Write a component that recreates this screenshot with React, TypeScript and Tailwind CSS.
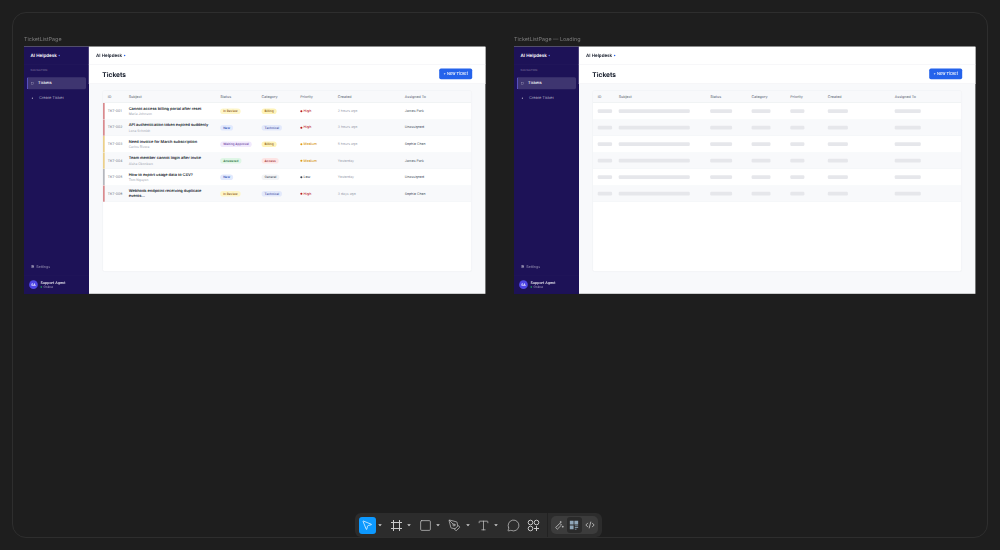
import { MessageCircle, MousePointer2, PenTool, Settings, Square, Type } from 'lucide-react';

type Ticket = {
  id: string;
  subject: string;
  requester: string;
  status: string;
  statusClass: string;
  category: string;
  categoryClass: string;
  priority: string;
  priorityClass: string;
  dotClass: string;
  barClass: string;
  created: string;
  assignee: string;
};

const reviewClass = 'bg-[#fef6c8] text-[#854d0e]';
const newClass = 'bg-[#e2e9fd] text-[#1e40af]';
const billingClass = 'bg-[#fef3b8] text-[#854d0e]';
const technicalClass = 'bg-[#e3e9fb] text-[#3a4a9f]';
const highText = 'text-[#c2383a]';
const mediumText = 'text-[#d99a1c]';

const tickets: Ticket[] = [
  { id: 'TKT-001', subject: 'Cannot access billing portal after reset', requester: 'Maria Johnson', status: 'In Review', statusClass: reviewClass, category: 'Billing', categoryClass: billingClass, priority: 'High', priorityClass: highText, dotClass: 'bg-[#b91c1c]', barClass: 'bg-[#d98a8e]', created: '2 hours ago', assignee: 'James Park' },
  { id: 'TKT-002', subject: 'API authentication token expired suddenly', requester: 'Lena Schmidt', status: 'New', statusClass: newClass, category: 'Technical', categoryClass: technicalClass, priority: 'High', priorityClass: highText, dotClass: 'bg-[#b91c1c]', barClass: 'bg-[#d98a8e]', created: '3 hours ago', assignee: 'Unassigned' },
  { id: 'TKT-003', subject: 'Need invoice for March subscription', requester: 'Carlos Rivera', status: 'Waiting Approval', statusClass: 'bg-[#f1e9fd] text-[#6b3fa0]', category: 'Billing', categoryClass: billingClass, priority: 'Medium', priorityClass: mediumText, dotClass: 'bg-[#e09a12]', barClass: 'bg-[#ecd08a]', created: '5 hours ago', assignee: 'Sophie Chen' },
  { id: 'TKT-004', subject: 'Team member cannot login after invite', requester: 'Aisha Okonkwo', status: 'Answered', statusClass: 'bg-[#dff6e6] text-[#166534]', category: 'Access', categoryClass: 'bg-[#fde4e4] text-[#991b1b]', priority: 'Medium', priorityClass: mediumText, dotClass: 'bg-[#e09a12]', barClass: 'bg-[#ecd08a]', created: 'Yesterday', assignee: 'James Park' },
  { id: 'TKT-005', subject: 'How to export usage data to CSV?', requester: 'Tom Nguyen', status: 'New', statusClass: newClass, category: 'General', categoryClass: 'bg-[#f3f4f6] text-[#374151]', priority: 'Low', priorityClass: 'text-[#4b5563]', dotClass: 'bg-[#374151]', barClass: 'bg-[#b5b7bd]', created: 'Yesterday', assignee: 'Unassigned' },
  { id: 'TKT-006', subject: 'Webhook endpoint receiving duplicate events...', requester: '', status: 'In Review', statusClass: reviewClass, category: 'Technical', categoryClass: technicalClass, priority: 'High', priorityClass: highText, dotClass: 'bg-[#b91c1c]', barClass: 'bg-[#d98a8e]', created: '3 days ago', assignee: 'Sophie Chen' },
];

const gridClass = 'grid grid-cols-[70px_305px_138px_129px_125px_223px_1fr] pl-[16px]';

function Pill({ className, children }: { className: string; children: string }) {
  return <span className={`rounded-full px-[10px] py-[3px] text-[10.5px] leading-[13px] font-medium whitespace-nowrap ${className}`}>{children}</span>;
}

function Skeleton({ width }: { width: string }) {
  return <div className={`h-3 rounded bg-[#e6e7eb] ${width}`} />;
}

function Sidebar() {
  return (
    <aside className="flex w-[216px] shrink-0 flex-col bg-[#1d1257] text-white">
      <div className="flex h-[60px] items-center gap-[6px] border-b border-white/5 pl-[22px] text-[15px] font-semibold">
        AI Helpdesk <span className="h-[5px] w-[5px] rounded-full bg-[#4f6ef7]" />
      </div>
      <div className="mt-[13px] mb-[17px] pl-[22px] text-[9px] leading-3 tracking-[0.1px] text-white/40">NAVIGATION</div>
      <div className="mx-[9px] flex h-10 items-center gap-[14px] rounded-md border-l-[3px] border-[#6d6cf0] bg-white/15 pl-[12px] text-[13px] font-medium">
        <span className="h-[9px] w-[9px] border border-white/60" />
        Tickets
      </div>
      <div className="mx-[9px] mt-[10px] flex h-10 items-center gap-[20px] pl-[17px] text-[13px] text-white/60">
        <span className="h-1 w-1 rounded-full bg-white/70" />
        Create Ticket
      </div>
      <div className="mt-auto flex h-[58px] items-center gap-[6px] pl-[23px] text-xs text-white/50">
        <Settings className="h-3 w-3 text-white/70" strokeWidth={3} />
        Settings
      </div>
      <div className="flex h-[62px] items-center gap-[9px] border-t border-white/5 pl-[17px]">
        <span className="flex h-[29px] w-[29px] items-center justify-center rounded-full bg-[#4f46e5] text-[11px] font-semibold">SA</span>
        <span>
          <span className="block text-xs leading-[15px] font-medium">Support Agent</span>
          <span className="flex items-center gap-[5px] text-[10.5px] leading-[14px] text-white/60">
            <span className="h-[5px] w-[5px] rounded-full bg-[#22c55e]" />
            Online
          </span>
        </span>
      </div>
    </aside>
  );
}

function Row({ ticket, index }: { ticket: Ticket; index: number }) {
  return (
    <div className={`relative h-[55px] items-center border-b border-[#eef0f3] ${gridClass} ${index % 2 ? 'bg-[#f8f9fb]' : 'bg-white'}`}>
      <span className={`absolute top-0 bottom-0 left-0 w-[6px] ${ticket.barClass}`} />
      <span className="text-[11.5px] text-[#6b7280]">{ticket.id}</span>
      <div className="pr-[24px]">
        <div className="text-[13px] leading-[16px] font-semibold text-[#111827]">{ticket.subject}</div>
        {ticket.requester && <div className="mt-[2px] text-[11px] leading-[14px] text-[#9ca3af]">{ticket.requester}</div>}
      </div>
      <div className="flex"><Pill className={ticket.statusClass}>{ticket.status}</Pill></div>
      <div className="flex"><Pill className={ticket.categoryClass}>{ticket.category}</Pill></div>
      <div className={`flex items-center gap-[4px] text-[11.5px] font-medium ${ticket.priorityClass}`}>
        <span className={`h-[7px] w-[7px] rounded-full ${ticket.dotClass}`} />
        {ticket.priority}
      </div>
      <span className="text-[11.5px] text-[#9ca3af]">{ticket.created}</span>
      <span className="text-[11.5px] text-[#4b5563]">{ticket.assignee}</span>
    </div>
  );
}

function SkeletonRow({ index }: { index: number }) {
  return (
    <div className={`h-[55px] items-center border-b border-[#eef0f3] ${gridClass} ${index % 2 ? 'bg-[#f8f9fb]' : 'bg-white'}`}>
      <Skeleton width="w-[48px]" />
      <Skeleton width="w-[237px]" />
      <Skeleton width="w-[73px]" />
      <Skeleton width="w-[63px]" />
      <Skeleton width="w-[47px]" />
      <Skeleton width="w-[67px]" />
      <Skeleton width="w-[87px]" />
    </div>
  );
}

// frames sit on the canvas at 30% zoom
function TicketFrame({ label, left, loading }: { label: string; left: string; loading?: boolean }) {
  return (
    <div className={`absolute top-[34px] w-[1538px] origin-top-left scale-[0.3] ${left}`}>
      <div className="h-[42px] text-lg leading-9 text-[#7d7d7d]">{label}</div>
      <div className="flex h-[824px] overflow-hidden bg-[#f8f9fb]">
        <Sidebar />
        <main className="flex min-w-0 flex-1 flex-col">
          <div className="flex h-[60px] shrink-0 items-center gap-[6px] border-b-2 border-[#e8eaee] bg-white pl-[24px] text-[15px] font-semibold text-[#111827]">
            AI Helpdesk <span className="h-[5px] w-[5px] rounded-full bg-[#2563eb]" />
          </div>
          <div className="flex h-[64px] shrink-0 items-center justify-between border-b-2 border-[#f0f1f4] bg-white pr-[44px] pl-[45px]">
            <h1 className="pt-[5px] text-[22px] font-bold text-[#111827]">Tickets</h1>
            <button className="h-9 w-[110px] rounded-md bg-[#2563eb] text-[13px] font-medium text-white">+ New Ticket</button>
          </div>
          <div className="mx-[45px] mt-[22px] mb-[73px] flex-1 overflow-hidden rounded-lg border-2 border-[#eceef1] bg-white">
            <div className={`h-10 items-center border-b-2 border-[#eceef1] bg-[#f8f9fb] text-xs font-medium text-[#6b7280] ${gridClass}`}>
              <span>ID</span>
              <span>Subject</span>
              <span>Status</span>
              <span>Category</span>
              <span>Priority</span>
              <span>Created</span>
              <span>Assigned To</span>
            </div>
            {loading
              ? tickets.map((ticket, index) => <SkeletonRow key={ticket.id} index={index} />)
              : tickets.map((ticket, index) => <Row key={ticket.id} ticket={ticket} index={index} />)}
          </div>
        </main>
      </div>
    </div>
  );
}

function Caret({ className }: { className: string }) {
  return (
    <svg viewBox="0 0 6 6" className={`h-[6px] w-[6px] shrink-0 ${className}`}>
      <path d="M1.2 2.2h3.6L3 4.2z" fill="#d0d0d0" />
    </svg>
  );
}

function Toolbar() {
  const iconClass = 'h-[13px] w-[13px] shrink-0 text-[#c9c9c9]';
  return (
    <div className="absolute top-[513px] left-[355px] flex h-[24px] w-[246.5px] items-center rounded-[6px] bg-[#2c2c2c] pl-[3.5px]">
      <div className="flex h-[17px] w-[17px] shrink-0 items-center justify-center rounded-[3px] bg-[#0d99ff]">
        <MousePointer2 className="h-[12px] w-[12px] text-white" strokeWidth={1.4} />
      </div>
      <Caret className="ml-[1px]" />
      {/* frame tool */}
      <svg viewBox="0 0 13 13" fill="none" stroke="#c9c9c9" strokeWidth="1" className={`ml-[7px] ${iconClass}`}>
        <path d="M1 3.5h11M1 9.5h11M3.5 1v11M9.5 1v11" />
      </svg>
      <Caret className="ml-[3px]" />
      <Square className={`ml-[7px] ${iconClass}`} strokeWidth={1.3} />
      <Caret className="ml-[3.5px]" />
      <PenTool className={`ml-[7px] ${iconClass}`} strokeWidth={1.3} />
      <Caret className="ml-[3.5px]" />
      <Type className={`ml-[6.5px] ${iconClass}`} strokeWidth={1.3} />
      <Caret className="ml-[3px]" />
      <MessageCircle className={`ml-[7.5px] ${iconClass}`} strokeWidth={1.3} />
      {/* actions */}
      <svg viewBox="0 0 13 13" fill="none" stroke="#c9c9c9" strokeWidth="1" className={`ml-[7px] ${iconClass}`}>
        <circle cx="3.5" cy="3.5" r="2.3" />
        <circle cx="9.5" cy="3.5" r="2.3" />
        <circle cx="3.5" cy="9.5" r="2.3" />
        <path d="M9.5 7v5M7 9.5h5" />
      </svg>
      <span className="ml-[7px] h-full w-px shrink-0 bg-[#222222]" />
      <div className="ml-[3px] flex h-[18px] w-[47px] shrink-0 items-center rounded-[5px] bg-[#3c3c3c]">
        <span className="flex h-[16px] w-[16px] items-center justify-center">
          <svg viewBox="0 0 12 12" fill="none" stroke="#c4c4c4" strokeWidth="1" className="h-[10px] w-[10px]">
            <path d="M2 9l5-5 2 2-5 5zM8 1.5v2M7 2.5h2M10.5 7v2M9.5 8h2" />
          </svg>
        </span>
        <span className="flex h-[16px] w-[15px] items-center justify-center rounded-[3px] bg-[#2a2a2a]">
          <svg viewBox="0 0 12 12" className="h-[10px] w-[10px]" fill="#8fa6b8">
            <path d="M1 1h4.5v4.5H1zM6.5 1H11v4.5H6.5zM1 6.5h4.5V11H1z" />
            <path d="M7 7h4M7 9h4M7 11h2" stroke="#8fa6b8" strokeWidth="1" />
          </svg>
        </span>
        <span className="flex h-[16px] w-[16px] items-center justify-center">
          <svg viewBox="0 0 12 12" fill="none" stroke="#c4c4c4" strokeWidth="1" className="h-[10px] w-[10px]">
            <path d="M3.5 3.5L1 6l2.5 2.5M8.5 3.5L11 6 8.5 8.5M7 2L5 10" />
          </svg>
        </span>
      </div>
    </div>
  );
}

export default function App() {
  return (
    <div className="relative h-[550px] w-[1000px] overflow-hidden bg-[#1e1e1e] font-['Inter',sans-serif] blur-[0.25px] [text-rendering:geometricPrecision]">
      <div className="absolute top-[12px] left-[11.5px] h-[525.5px] w-[976px] rounded-[14px] border border-[#2e2e2e]" />
      <TicketFrame label="TicketListPage" left="left-[23.5px]" />
      <TicketFrame label="TicketListPage — Loading" left="left-[513.5px]" loading />
      <Toolbar />
    </div>
  );
}
